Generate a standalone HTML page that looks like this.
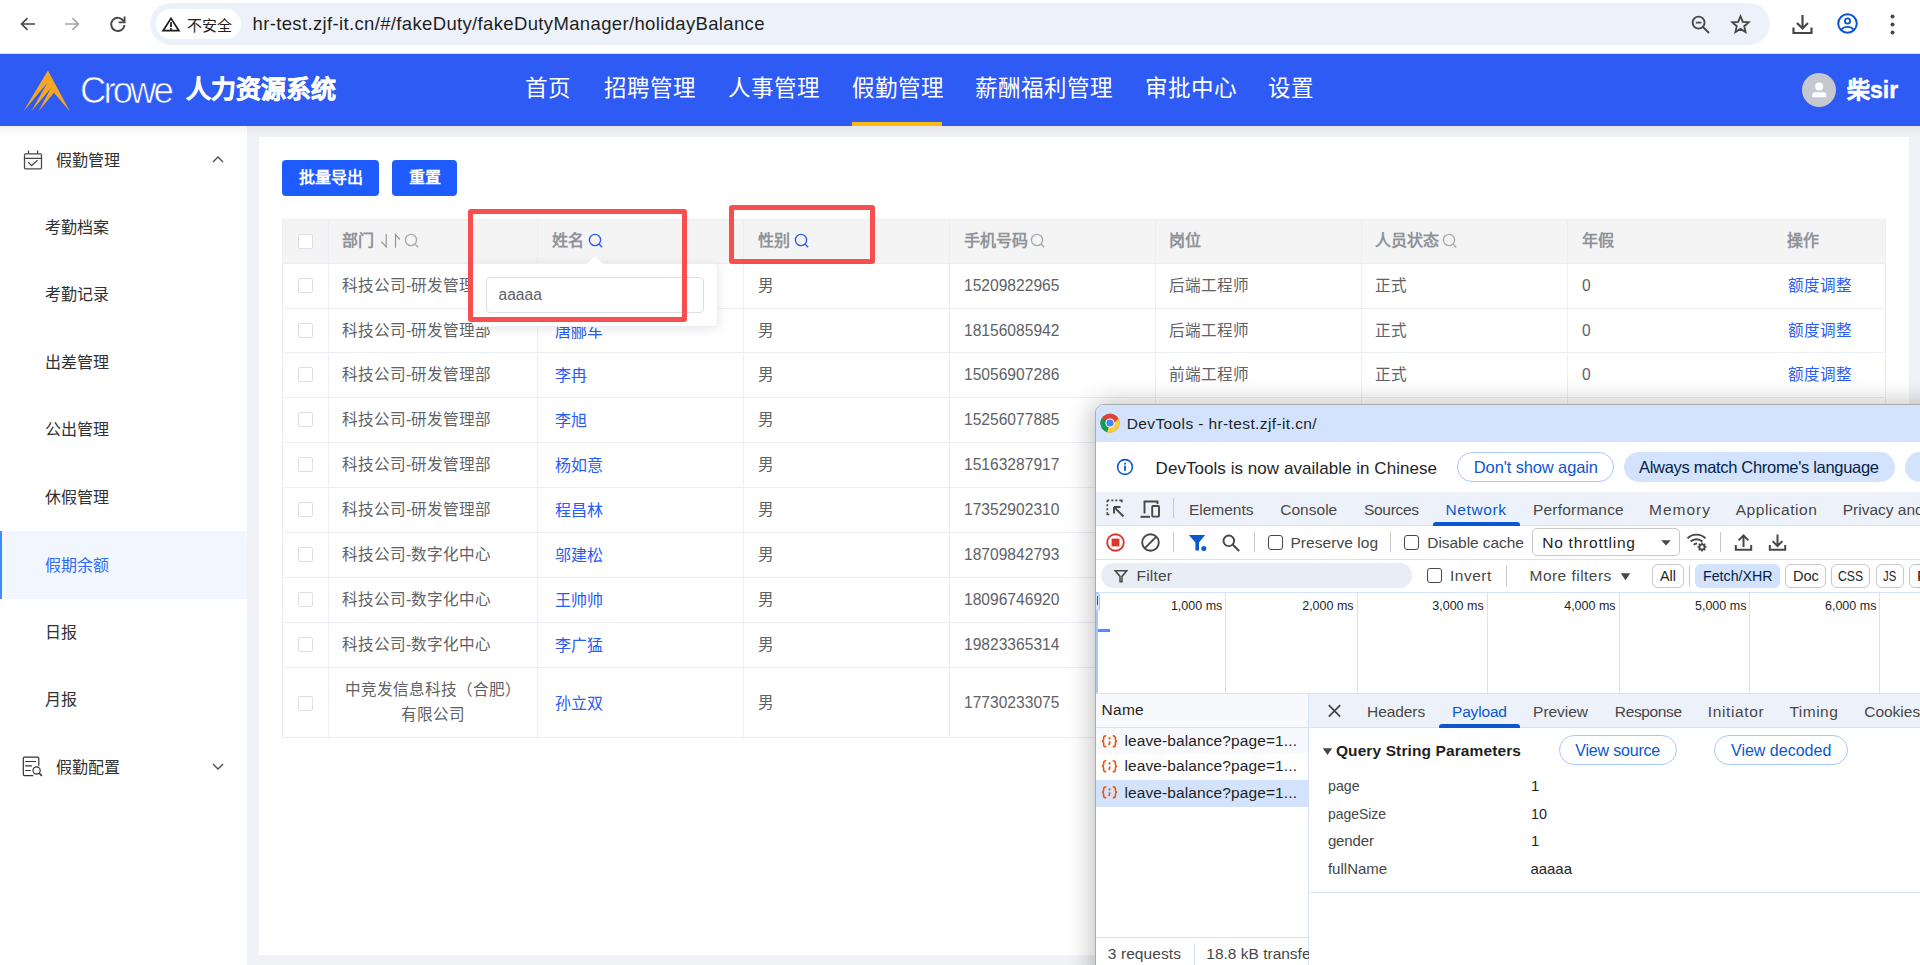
<!DOCTYPE html><html lang="zh-CN"><head><meta charset="utf-8"><style>
*{box-sizing:border-box;margin:0;padding:0}
html,body{width:1920px;height:965px;overflow:hidden}
body{position:relative;background:#f0f2f5;font-family:"Liberation Sans",sans-serif;color:#303133}
.a{position:absolute;white-space:nowrap}
#chrome{left:0;top:0;width:1920px;height:54px;background:#fff;border-bottom:1px solid #dadce0}
#omni{left:150px;top:3px;width:1620px;height:42px;border-radius:21px;background:#edf2fa}
#chip{left:156px;top:9px;width:85px;height:30px;border-radius:15px;background:#fff}
#chiptxt{left:186.5px;top:15.5px;font-size:15px;color:#1f1f1f;line-height:20px}
#url{left:252px;top:12px;font-size:19px;color:#1f1f1f;line-height:24px;letter-spacing:0.23px}
#hdr{left:0;top:54px;width:1920px;height:72px;background:#2f5bf5}
#crowe{left:80px;top:69px;font-size:36.5px;color:#fff;line-height:44px;letter-spacing:-2.9px;-webkit-text-stroke:0.7px #2f5bf5}
#sysname{left:186px;top:72px;font-size:25px;font-weight:bold;color:#fff;line-height:34px;-webkit-text-stroke:0.5px #fff}
.nav{top:72px;font-size:22.5px;color:#fff;line-height:34px}
#navline{left:852px;top:122px;width:90px;height:4px;background:#fdb913}
#avatar{left:1802px;top:73px;width:34px;height:34px;border-radius:50%;background:#c5c8cf;overflow:hidden}
#uname{left:1847px;top:73px;font-size:23px;font-weight:bold;color:#fff;line-height:34px;-webkit-text-stroke:0.4px #fff}
#side{left:0;top:126px;width:247px;height:839px;background:#fff}
#hshadow{left:0;top:126px;width:1920px;height:10px;background:linear-gradient(rgba(0,0,0,0.05),rgba(0,0,0,0))}
.si{left:45px;font-size:16px;color:#303133;line-height:22px}
#active{left:0;top:531px;width:247px;height:68px;background:#f2f7ff;border-left:2px solid #3d8bff}
#card{left:259px;top:137px;width:1650px;height:818px;background:#fff}
.btn{top:160px;height:36px;border-radius:4px;background:#1f5cff;color:#fff;font-size:16px;font-weight:bold;line-height:36px;text-align:center}
.hl{height:1px;background:#ebeef5}
.vl{width:1px;background:#ebeef5}
.th{font-size:16px;font-weight:bold;color:#909399;line-height:22px}
.td{font-size:15.6px;color:#606266;line-height:22px}
.lk{font-size:15.6px;color:#2a5cf6;line-height:22px}
.cb{width:15px;height:15px;border:1px solid #dcdfe6;border-radius:2px;background:#fff}
.red{border:5px solid #f74f4f;border-radius:3px}
/* devtools */
.dt{font-family:"Liberation Sans",sans-serif}
</style></head><body>
<div id="chrome" class="a"></div><div id="omni" class="a"></div><div id="chip" class="a"></div>
<svg class="a" style="left:18px;top:14px" width="20" height="20" viewBox="0 0 20 20"><path d="M17 10H4M9.5 4.2L3.6 10l5.9 5.8" fill="none" stroke="#474747" stroke-width="1.7"/></svg>
<svg class="a" style="left:62px;top:14px" width="20" height="20" viewBox="0 0 20 20"><path d="M3 10H16M10.5 4.2L16.4 10l-5.9 5.8" fill="none" stroke="#a8a8a8" stroke-width="1.7"/></svg>
<svg class="a" style="left:108px;top:14px" width="20" height="20" viewBox="0 0 20 20"><path d="M15.6 7.2A6.6 6.6 0 1 0 16.4 11" fill="none" stroke="#474747" stroke-width="1.9"/><path d="M16.6 2.4V8.4H10.6" fill="none" stroke="#474747" stroke-width="1.9"/></svg>
<svg class="a" style="left:161px;top:16px" width="20" height="17" viewBox="0 0 20 17"><path d="M10 2.4 L17.9 14.7 H2.1 Z" fill="none" stroke="#1f1f1f" stroke-width="1.7" stroke-linejoin="miter"/><rect x="9.1" y="6.2" width="1.8" height="4.8" fill="#1f1f1f"/><rect x="9.1" y="12" width="1.8" height="1.8" fill="#1f1f1f"/></svg>
<div id="chiptxt" class="a">不安全</div>
<div class="a" style="left:252.50px;top:14.84px;font-size:18.50px;line-height:18.50px;color:#1f1f1f;letter-spacing:0.353px;">hr-test.zjf-it.cn/#/fakeDuty/fakeDutyManager/holidayBalance</div>
<svg class="a" style="left:1690px;top:14px" width="22" height="22" viewBox="0 0 22 22"><circle cx="8.6" cy="8.6" r="6" fill="none" stroke="#474747" stroke-width="1.9"/><path d="M13 13L19 19M5.8 8.6H11.4" stroke="#474747" stroke-width="1.9" fill="none"/></svg>
<svg class="a" style="left:1730px;top:14px" width="21" height="20" viewBox="0 0 21 20"><path d="M10.5 2.2l2.3 5.6 6 .5-4.6 3.9 1.4 5.9-5.1-3.2-5.1 3.2 1.4-5.9-4.6-3.9 6-.5z" fill="none" stroke="#474747" stroke-width="1.8" stroke-linejoin="miter"/></svg>
<svg class="a" style="left:1791px;top:13px" width="23" height="23" viewBox="0 0 23 23"><path d="M11.5 2V15M6 10l5.5 5.5L17 10" fill="none" stroke="#474747" stroke-width="2.2"/><path d="M2.5 14.5V20H20.5V14.5" fill="none" stroke="#474747" stroke-width="2.2"/></svg>
<svg class="a" style="left:1836px;top:12px" width="23" height="23" viewBox="0 0 23 23"><circle cx="11.5" cy="11.5" r="9.3" fill="none" stroke="#0b57d0" stroke-width="2"/><circle cx="11.5" cy="9" r="2.6" fill="none" stroke="#0b57d0" stroke-width="1.8"/><path d="M5.2 17.6C7 15.6 9 14.9 11.5 14.9S16 15.6 17.8 17.6" fill="none" stroke="#0b57d0" stroke-width="1.8"/></svg>
<svg class="a" style="left:1888px;top:13px" width="9" height="23" viewBox="0 0 9 23"><circle cx="4.5" cy="3.5" r="2" fill="#474747"/><circle cx="4.5" cy="11.5" r="2" fill="#474747"/><circle cx="4.5" cy="19.5" r="2" fill="#474747"/></svg>
<div id="hdr" class="a"></div>
<svg class="a" style="left:20px;top:67px" width="54" height="48" viewBox="0 0 54 48"><path d="M27.9 3.5 L50 44.5 L33.9 25.8 L18.4 44.5 L30.8 21.2 L11.2 44.5 L27.2 16 L3.3 44.5 Z" fill="#f5a623"/></svg>
<div id="crowe" class="a">Crowe</div>
<div id="sysname" class="a">人力资源系统</div>
<div class="a nav" style="left:525px">首页</div>
<div class="a nav" style="left:604px">招聘管理</div>
<div class="a nav" style="left:728px">人事管理</div>
<div class="a nav" style="left:852px">假勤管理</div>
<div class="a nav" style="left:975px">薪酬福利管理</div>
<div class="a nav" style="left:1145px">审批中心</div>
<div class="a nav" style="left:1268px">设置</div>
<div id="navline" class="a"></div>
<div id="avatar" class="a"><svg width="34" height="34" viewBox="0 0 34 34"><circle cx="17.2" cy="13.6" r="4" fill="#fff"/><path d="M10.2 24.3V22C10.2 20.2 11.2 19.3 13 19.3H21.4C23.2 19.3 24.2 20.2 24.2 22V24.3Z" fill="#fff"/></svg></div>
<div id="uname" class="a">柴sir</div>
<div id="side" class="a"></div><div id="hshadow" class="a"></div><div id="active" class="a"></div>
<svg class="a" style="left:22px;top:149px" width="22" height="22" viewBox="0 0 22 22"><rect x="2.5" y="4.8" width="17" height="15" rx="1.2" fill="none" stroke="#4a4a4a" stroke-width="1.3"/><path d="M2.5 9.3H19.5M6.5 1.5V5M15.6 1.5V5" stroke="#4a4a4a" stroke-width="1.3" fill="none"/><path d="M6.3 13.3L9.6 16.6L15.6 11.3" stroke="#4a4a4a" stroke-width="1.3" fill="none"/></svg>
<svg class="a" style="left:211px;top:154px" width="14" height="10" viewBox="0 0 14 10"><path d="M2 8L7 3L12 8" fill="none" stroke="#4a4a4a" stroke-width="1.3"/></svg>
<div class="a si" style="left:56px;top:149.5px">假勤管理</div>
<div class="a si" style="top:217px">考勤档案</div>
<div class="a si" style="top:284px">考勤记录</div>
<div class="a si" style="top:352px">出差管理</div>
<div class="a si" style="top:419px">公出管理</div>
<div class="a si" style="top:487px">休假管理</div>
<div class="a si" style="top:622px">日报</div>
<div class="a si" style="top:689px">月报</div>
<div class="a si" style="top:554.5px;color:#2f6bff">假期余额</div>
<svg class="a" style="left:21px;top:756px" width="24" height="22" viewBox="0 0 24 22"><path d="M12.3 19.6H3.6Q2.3 19.6 2.3 18.3V2.5Q2.3 1.2 3.6 1.2H16.5Q17.8 1.2 17.8 2.5V9.8" fill="none" stroke="#333" stroke-width="1.2"/><path d="M4.2 5.5H15M4.2 9.8H10.9M4.2 14.5H9.6" stroke="#333" stroke-width="1.2"/><circle cx="15.6" cy="14.5" r="3.6" fill="none" stroke="#333" stroke-width="1.2"/><path d="M18.2 17.2L20.9 19.9" stroke="#333" stroke-width="1.6"/></svg>
<svg class="a" style="left:211px;top:761px" width="14" height="10" viewBox="0 0 14 10"><path d="M2 3L7 8L12 3" fill="none" stroke="#4a4a4a" stroke-width="1.3"/></svg>
<div class="a si" style="left:56px;top:757px">假勤配置</div>
<div id="card" class="a"></div>
<div class="a btn" style="left:282px;width:97px">批量导出</div>
<div class="a btn" style="left:392px;width:65px">重置</div>
<div class="a" style="left:282.0px;top:219px;width:1604.0px;height:44.0px;background:#f4f4f5"></div>
<div class="a hl" style="left:282.0px;top:219.0px;width:1604.0px"></div>
<div class="a hl" style="left:282.0px;top:263.0px;width:1604.0px"></div>
<div class="a hl" style="left:282.0px;top:308.0px;width:1604.0px"></div>
<div class="a hl" style="left:282.0px;top:352.0px;width:1604.0px"></div>
<div class="a hl" style="left:282.0px;top:397.0px;width:1604.0px"></div>
<div class="a hl" style="left:282.0px;top:442.0px;width:1604.0px"></div>
<div class="a hl" style="left:282.0px;top:487.0px;width:1604.0px"></div>
<div class="a hl" style="left:282.0px;top:532.0px;width:1604.0px"></div>
<div class="a hl" style="left:282.0px;top:577.0px;width:1604.0px"></div>
<div class="a hl" style="left:282.0px;top:622.0px;width:1604.0px"></div>
<div class="a hl" style="left:282.0px;top:667.0px;width:1604.0px"></div>
<div class="a hl" style="left:282.0px;top:737.0px;width:1604.0px"></div>
<div class="a vl" style="left:282.0px;top:219px;height:519.0px"></div>
<div class="a vl" style="left:328.0px;top:219px;height:519.0px"></div>
<div class="a vl" style="left:537.0px;top:219px;height:519.0px"></div>
<div class="a vl" style="left:743.0px;top:219px;height:519.0px"></div>
<div class="a vl" style="left:949.0px;top:219px;height:519.0px"></div>
<div class="a vl" style="left:1155.0px;top:219px;height:519.0px"></div>
<div class="a vl" style="left:1361.0px;top:219px;height:519.0px"></div>
<div class="a vl" style="left:1567.0px;top:219px;height:519.0px"></div>
<div class="a vl" style="left:1885.0px;top:219px;height:519.0px"></div>
<div class="a cb" style="left:298px;top:233.5px"></div>
<div class="a th" style="left:342.0px;top:230px">部门</div>
<div class="a th" style="left:552.0px;top:230px">姓名</div>
<div class="a th" style="left:758.0px;top:230px">性别</div>
<div class="a th" style="left:964.0px;top:230px">手机号码</div>
<div class="a th" style="left:1169.0px;top:230px">岗位</div>
<div class="a th" style="left:1375.0px;top:230px">人员状态</div>
<div class="a th" style="left:1581.5px;top:230px">年假</div>
<div class="a th" style="left:1787.0px;top:230px">操作</div>
<svg class="a" style="left:379px;top:233px" width="24" height="16" viewBox="0 0 24 16"><path d="M7.25 1V13.9L2.25 8.6M16.5 14.7V1.7L21 6.5" fill="none" stroke="#8d9098" stroke-width="1.1"/></svg>
<svg class="a" style="left:404.0px;top:233px" width="16" height="16" viewBox="0 0 16 16"><circle cx="7" cy="7" r="5.6" fill="none" stroke="#a8abb2" stroke-width="1.4"/><path d="M11 11L14.2 14.2" stroke="#a8abb2" stroke-width="1.4"/></svg>
<svg class="a" style="left:587.5px;top:233px" width="16" height="16" viewBox="0 0 16 16"><circle cx="7" cy="7" r="5.6" fill="none" stroke="#2a5cf6" stroke-width="1.4"/><path d="M11 11L14.2 14.2" stroke="#2a5cf6" stroke-width="1.4"/></svg>
<svg class="a" style="left:793.5px;top:233px" width="16" height="16" viewBox="0 0 16 16"><circle cx="7" cy="7" r="5.6" fill="none" stroke="#2a5cf6" stroke-width="1.4"/><path d="M11 11L14.2 14.2" stroke="#2a5cf6" stroke-width="1.4"/></svg>
<svg class="a" style="left:1030.0px;top:233px" width="16" height="16" viewBox="0 0 16 16"><circle cx="7" cy="7" r="5.6" fill="none" stroke="#a8abb2" stroke-width="1.4"/><path d="M11 11L14.2 14.2" stroke="#a8abb2" stroke-width="1.4"/></svg>
<svg class="a" style="left:1442.0px;top:233px" width="16" height="16" viewBox="0 0 16 16"><circle cx="7" cy="7" r="5.6" fill="none" stroke="#a8abb2" stroke-width="1.4"/><path d="M11 11L14.2 14.2" stroke="#a8abb2" stroke-width="1.4"/></svg>
<div class="a cb" style="left:298px;top:278.0px"></div>
<div class="a td" style="left:342px;top:274.5px">科技公司-研发管理部</div>
<div class="a td" style="left:758px;top:274.5px">男</div>
<div class="a td" style="left:964px;top:274.5px">15209822965</div>
<div class="a td" style="left:1169px;top:274.5px">后端工程师</div>
<div class="a td" style="left:1375px;top:274.5px">正式</div>
<div class="a td" style="left:1582px;top:274.5px">0</div>
<div class="a lk" style="left:1788px;top:274.5px">额度调整</div>
<div class="a cb" style="left:298px;top:323.0px"></div>
<div class="a td" style="left:342px;top:319.5px">科技公司-研发管理部</div>
<div class="a lk" style="left:555px;top:320.8px;font-size:16px">唐郦车</div>
<div class="a td" style="left:758px;top:319.5px">男</div>
<div class="a td" style="left:964px;top:319.5px">18156085942</div>
<div class="a td" style="left:1169px;top:319.5px">后端工程师</div>
<div class="a td" style="left:1375px;top:319.5px">正式</div>
<div class="a td" style="left:1582px;top:319.5px">0</div>
<div class="a lk" style="left:1788px;top:319.5px">额度调整</div>
<div class="a cb" style="left:298px;top:367.0px"></div>
<div class="a td" style="left:342px;top:363.5px">科技公司-研发管理部</div>
<div class="a lk" style="left:555px;top:364.8px;font-size:16px">李冉</div>
<div class="a td" style="left:758px;top:363.5px">男</div>
<div class="a td" style="left:964px;top:363.5px">15056907286</div>
<div class="a td" style="left:1169px;top:363.5px">前端工程师</div>
<div class="a td" style="left:1375px;top:363.5px">正式</div>
<div class="a td" style="left:1582px;top:363.5px">0</div>
<div class="a lk" style="left:1788px;top:363.5px">额度调整</div>
<div class="a cb" style="left:298px;top:412.0px"></div>
<div class="a td" style="left:342px;top:408.5px">科技公司-研发管理部</div>
<div class="a lk" style="left:555px;top:409.8px;font-size:16px">李旭</div>
<div class="a td" style="left:758px;top:408.5px">男</div>
<div class="a td" style="left:964px;top:408.5px">15256077885</div>
<div class="a cb" style="left:298px;top:457.0px"></div>
<div class="a td" style="left:342px;top:453.5px">科技公司-研发管理部</div>
<div class="a lk" style="left:555px;top:454.8px;font-size:16px">杨如意</div>
<div class="a td" style="left:758px;top:453.5px">男</div>
<div class="a td" style="left:964px;top:453.5px">15163287917</div>
<div class="a cb" style="left:298px;top:502.0px"></div>
<div class="a td" style="left:342px;top:498.5px">科技公司-研发管理部</div>
<div class="a lk" style="left:555px;top:499.8px;font-size:16px">程昌林</div>
<div class="a td" style="left:758px;top:498.5px">男</div>
<div class="a td" style="left:964px;top:498.5px">17352902310</div>
<div class="a cb" style="left:298px;top:547.0px"></div>
<div class="a td" style="left:342px;top:543.5px">科技公司-数字化中心</div>
<div class="a lk" style="left:555px;top:544.8px;font-size:16px">邬建松</div>
<div class="a td" style="left:758px;top:543.5px">男</div>
<div class="a td" style="left:964px;top:543.5px">18709842793</div>
<div class="a cb" style="left:298px;top:592.0px"></div>
<div class="a td" style="left:342px;top:588.5px">科技公司-数字化中心</div>
<div class="a lk" style="left:555px;top:589.8px;font-size:16px">王帅帅</div>
<div class="a td" style="left:758px;top:588.5px">男</div>
<div class="a td" style="left:964px;top:588.5px">18096746920</div>
<div class="a cb" style="left:298px;top:637.0px"></div>
<div class="a td" style="left:342px;top:633.5px">科技公司-数字化中心</div>
<div class="a lk" style="left:555px;top:634.8px;font-size:16px">李广猛</div>
<div class="a td" style="left:758px;top:633.5px">男</div>
<div class="a td" style="left:964px;top:633.5px">19823365314</div>
<div class="a cb" style="left:298px;top:695.5px"></div>
<div class="a td" style="left:328px;width:209.5px;top:677.0px;text-align:center;white-space:normal;line-height:25px;padding:0 16px">中竞发信息科技（合肥）有限公司</div>
<div class="a lk" style="left:555px;top:692.8px;font-size:16px">孙立双</div>
<div class="a td" style="left:758px;top:691.5px">男</div>
<div class="a td" style="left:964px;top:691.5px">17730233075</div>
<div class="a" style="left:472px;top:263px;width:246px;height:64px;background:#fff;border-radius:4px;border:1px solid #ebeef5;box-shadow:0 2px 12px rgba(0,0,0,0.1)"></div>
<svg class="a" style="left:584px;top:252px" width="22" height="12" viewBox="0 0 22 12"><path d="M3 12L11 4L19 12Z" fill="#fff"/></svg>
<div class="a" style="left:486px;top:277px;width:218px;height:35.5px;border:1px solid #dcdfe6;border-radius:4px;background:#fff"></div>
<div class="a td" style="left:498.5px;top:284px">aaaaa</div>
<div class="a red" style="left:467.5px;top:209px;width:219px;height:113px"></div>
<div class="a red" style="left:729px;top:205px;width:146px;height:58.5px"></div>
<div class="a" style="left:1095px;top:404px;width:900px;height:600px;border-radius:9px;background:#fff;box-shadow:-2px 0 26px rgba(0,0,0,0.28);border:1px solid #ababab;overflow:hidden">
</div>
<div class="a" style="left:1096px;top:405px;width:830px;height:37px;background:#d3e3fd;border-top-left-radius:8px"></div>
<svg class="a" style="left:1100px;top:413px" width="20" height="20" viewBox="0 0 20 20">
<circle cx="10" cy="10" r="9.6" fill="#db4437"/>
<path d="M10 10 L1.7 5.2 A9.6 9.6 0 0 0 7.2 19.2 Z" fill="#0f9d58"/>
<path d="M10 10 L7.2 19.2 A9.6 9.6 0 0 0 19.6 10 L18.3 5.2 Z" fill="#ffcd40"/>
<path d="M10 5.4 H18.3 L14 10 Z" fill="#db4437"/>
<circle cx="10" cy="10" r="4.6" fill="#fff"/><circle cx="10" cy="10" r="3.6" fill="#4285f4"/></svg>
<div class="a" style="left:1126.70px;top:416.08px;font-size:15.50px;line-height:15.50px;color:#1f1f1f;letter-spacing:0.386px;">DevTools - hr-test.zjf-it.cn/</div>
<svg class="a" style="left:1116px;top:458px" width="18" height="18" viewBox="0 0 18 18"><circle cx="9" cy="9" r="7.4" fill="none" stroke="#0b57d0" stroke-width="1.6"/><rect x="8.1" y="7.6" width="1.8" height="5.2" fill="#0b57d0"/><rect x="8.1" y="4.8" width="1.8" height="1.8" fill="#0b57d0"/></svg>
<div class="a" style="left:1155.60px;top:459.81px;font-size:17.00px;line-height:17.00px;color:#1f1f1f;letter-spacing:0.050px;">DevTools is now available in Chinese</div>
<div class="a" style="left:1457px;top:452px;width:157px;height:30px;border:1px solid #a8c7fa;border-radius:15px"></div>
<div class="a" style="left:1473.80px;top:458.53px;font-size:16.50px;line-height:16.50px;color:#0b57d0;letter-spacing:-0.124px;">Don't show again</div>
<div class="a" style="left:1624px;top:452px;width:271px;height:30px;background:#d3e3fd;border-radius:15px"></div>
<div class="a" style="left:1639.00px;top:458.53px;font-size:16.50px;line-height:16.50px;color:#041e49;letter-spacing:-0.308px;">Always match Chrome's language</div>
<div class="a" style="left:1905px;top:452px;width:60px;height:30px;background:#d3e3fd;border-radius:15px"></div>
<div class="a" style="left:1096px;top:492px;width:830px;height:34px;background:#edf2fa;border-bottom:1px solid #d3e3fd"></div>
<svg class="a" style="left:1105px;top:498px" width="22" height="21" viewBox="0 0 22 21"><path d="M2.3 2.3h2M6.3 2.3h2M10.3 2.3h2M14.3 2.3h2.5v2M2.3 2.3v2M2.3 6.3v2M2.3 10.3v2M2.3 14.3v2.2h2" fill="none" stroke="#474747" stroke-width="1.7"/><path d="M9 9L18.5 18.5M9 9V15.5M9 9H15.5" fill="none" stroke="#474747" stroke-width="1.9"/></svg>
<svg class="a" style="left:1139px;top:498px" width="23" height="21" viewBox="0 0 23 21"><path d="M5.5 15.5V3.5H18.5V6" fill="none" stroke="#474747" stroke-width="1.9"/><path d="M1.5 18.8H11" stroke="#474747" stroke-width="2"/><rect x="13.2" y="8" width="6.8" height="10.6" rx="0.8" fill="none" stroke="#474747" stroke-width="1.9"/></svg>
<div class="a" style="left:1173px;top:498px;width:1px;height:20px;background:#c7c7c7"></div>
<div class="a" style="left:1189.00px;top:502.08px;font-size:15.50px;line-height:15.50px;color:#474747;letter-spacing:-0.028px;">Elements</div>
<div class="a" style="left:1280.25px;top:502.08px;font-size:15.50px;line-height:15.50px;color:#474747;letter-spacing:0.019px;">Console</div>
<div class="a" style="left:1364.00px;top:502.08px;font-size:15.50px;line-height:15.50px;color:#474747;letter-spacing:-0.308px;">Sources</div>
<div class="a" style="left:1445.50px;top:502.08px;font-size:15.50px;line-height:15.50px;color:#0b57d0;letter-spacing:0.603px;">Network</div>
<div class="a" style="left:1533.00px;top:502.08px;font-size:15.50px;line-height:15.50px;color:#474747;letter-spacing:0.201px;">Performance</div>
<div class="a" style="left:1649.00px;top:502.08px;font-size:15.50px;line-height:15.50px;color:#474747;letter-spacing:1.001px;">Memory</div>
<div class="a" style="left:1735.75px;top:502.08px;font-size:15.50px;line-height:15.50px;color:#474747;letter-spacing:0.517px;">Application</div>
<div class="a" style="left:1842.75px;top:502.08px;font-size:15.50px;line-height:15.50px;color:#474747;letter-spacing:0.000px;">Privacy and security</div>
<div class="a" style="left:1432.5px;top:522px;width:87.5px;height:4px;background:#0b57d0;border-radius:3px 3px 0 0"></div>
<div class="a" style="left:1096px;top:559px;width:830px;height:1px;background:#d3e3fd"></div>
<svg class="a" style="left:1105px;top:532px" width="21" height="21" viewBox="0 0 21 21"><circle cx="10.5" cy="10.5" r="8.3" fill="none" stroke="#dc362e" stroke-width="1.9"/><rect x="6.6" y="6.6" width="7.8" height="7.8" fill="#dc362e"/></svg>
<svg class="a" style="left:1140px;top:532px" width="21" height="21" viewBox="0 0 21 21"><circle cx="10.5" cy="10.5" r="8.3" fill="none" stroke="#474747" stroke-width="1.9"/><path d="M4.6 16.4L16.4 4.6" stroke="#474747" stroke-width="1.9"/></svg>
<div class="a" style="left:1173px;top:532px;width:1px;height:20px;background:#c7c7c7"></div>
<svg class="a" style="left:1188px;top:534px" width="20" height="18" viewBox="0 0 20 18"><path d="M0.8 1H17.2L11 8.6V16.4H7.4V8.6Z" fill="#0b57d0"/><circle cx="15.8" cy="14.4" r="2.5" fill="#0b57d0"/></svg>
<svg class="a" style="left:1222px;top:534px" width="19" height="18" viewBox="0 0 19 18"><circle cx="6.8" cy="6.8" r="5.3" fill="none" stroke="#474747" stroke-width="1.9"/><path d="M10.6 10.6L17.2 17" stroke="#474747" stroke-width="2.1"/></svg>
<div class="a" style="left:1254px;top:532px;width:1px;height:20px;background:#c7c7c7"></div>
<div class="a" style="left:1268px;top:535px;width:15px;height:15px;border:1.6px solid #474747;border-radius:3px"></div>
<div class="a" style="left:1290.40px;top:534.68px;font-size:15.50px;line-height:15.50px;color:#474747;letter-spacing:0.061px;">Preserve log</div>
<div class="a" style="left:1390px;top:532px;width:1px;height:20px;background:#c7c7c7"></div>
<div class="a" style="left:1404px;top:535px;width:15px;height:15px;border:1.6px solid #474747;border-radius:3px"></div>
<div class="a" style="left:1427.30px;top:534.68px;font-size:15.50px;line-height:15.50px;color:#474747;letter-spacing:-0.057px;">Disable cache</div>
<div class="a" style="left:1531.5px;top:527.7px;width:148px;height:28.5px;border:1px solid #c7c7c7;border-radius:5px"></div>
<div class="a" style="left:1542.20px;top:534.68px;font-size:15.50px;line-height:15.50px;color:#1f1f1f;letter-spacing:0.768px;">No throttling</div>
<svg class="a" style="left:1660px;top:539px" width="12" height="8" viewBox="0 0 12 8"><path d="M1.2 1.2H10.8L6 6.4Z" fill="#474747"/></svg>
<svg class="a" style="left:1686px;top:532px" width="23" height="20" viewBox="0 0 23 20"><path d="M1.5 6.2A13 13 0 0 1 19.5 6.2M4.6 9.5A8.8 8.8 0 0 1 16.4 9.5M7.7 12.8A4.5 4.5 0 0 1 11 11.5" fill="none" stroke="#474747" stroke-width="1.9"/><circle cx="16" cy="15" r="2.6" fill="none" stroke="#474747" stroke-width="1.9"/><path d="M16 10.5V12M16 18V19.5M11.5 15H13M19 15H20.5M12.8 11.8L13.9 12.9M18.1 17.1L19.2 18.2M12.8 18.2L13.9 17.1M18.1 12.9L19.2 11.8" stroke="#474747" stroke-width="1.6"/></svg>
<div class="a" style="left:1720px;top:532px;width:1px;height:20px;background:#c7c7c7"></div>
<svg class="a" style="left:1734px;top:533px" width="19" height="19" viewBox="0 0 19 19"><path d="M9.5 14V2.5M4.6 7.4L9.5 2.5L14.4 7.4M1.8 12V16.8H17.2V12" fill="none" stroke="#474747" stroke-width="2"/></svg>
<svg class="a" style="left:1768px;top:533px" width="19" height="19" viewBox="0 0 19 19"><path d="M9.5 1.5V13M4.6 8.1L9.5 13L14.4 8.1M1.8 12V16.8H17.2V12" fill="none" stroke="#474747" stroke-width="2"/></svg>
<div class="a" style="left:1096px;top:592px;width:830px;height:1px;background:#d3e3fd"></div>
<div class="a" style="left:1101px;top:563.4px;width:311px;height:24.4px;border-radius:12.2px;background:#e9eef6"></div>
<svg class="a" style="left:1114px;top:569px" width="14" height="14" viewBox="0 0 14 14"><path d="M1.2 1.8H12.8L8 7.4V12.8H6V7.4Z" fill="none" stroke="#474747" stroke-width="1.5"/></svg>
<div class="a" style="left:1136.60px;top:568.38px;font-size:15.50px;line-height:15.50px;color:#474747;letter-spacing:0.170px;">Filter</div>
<div class="a" style="left:1427px;top:568px;width:15px;height:15px;border:1.6px solid #474747;border-radius:3px"></div>
<div class="a" style="left:1450.00px;top:568.38px;font-size:15.50px;line-height:15.50px;color:#474747;letter-spacing:0.510px;">Invert</div>
<div class="a" style="left:1506px;top:565.5px;width:1px;height:20px;background:#c7c7c7"></div>
<div class="a" style="left:1529.50px;top:568.38px;font-size:15.50px;line-height:15.50px;color:#474747;letter-spacing:0.468px;">More filters</div>
<svg class="a" style="left:1620px;top:572px" width="11" height="9" viewBox="0 0 11 9"><path d="M0.8 1.2H10.2L5.5 8.3Z" fill="#474747"/></svg>
<div class="a" style="left:1652px;top:564.3px;width:31.6px;height:23.5px;border:1px solid #c7c7c7;border-radius:6px"></div>
<div class="a" style="left:1659.50px;top:568.38px;font-size:15.50px;line-height:15.50px;color:#1f1f1f;letter-spacing:0.000px;transform:scaleX(0.9279);transform-origin:0 0;">All</div>
<div class="a" style="left:1689px;top:565.5px;width:1px;height:20px;background:#c7c7c7"></div>
<div class="a" style="left:1694.7px;top:564.3px;width:85px;height:23.5px;background:#d3e3fd;border-radius:6px"></div>
<div class="a" style="left:1702.80px;top:568.38px;font-size:15.50px;line-height:15.50px;color:#041e49;letter-spacing:0.000px;transform:scaleX(0.9183);transform-origin:0 0;">Fetch/XHR</div>
<div class="a" style="left:1785.2px;top:564.3px;width:40.6px;height:23.5px;border:1px solid #c7c7c7;border-radius:6px"></div>
<div class="a" style="left:1792.70px;top:568.38px;font-size:15.50px;line-height:15.50px;color:#1f1f1f;letter-spacing:0.000px;transform:scaleX(0.9364);transform-origin:0 0;">Doc</div>
<div class="a" style="left:1830.7px;top:564.3px;width:39.8px;height:23.5px;border:1px solid #c7c7c7;border-radius:6px"></div>
<div class="a" style="left:1838.20px;top:568.38px;font-size:15.50px;line-height:15.50px;color:#1f1f1f;letter-spacing:0.000px;transform:scaleX(0.7849);transform-origin:0 0;">CSS</div>
<div class="a" style="left:1875.9px;top:564.3px;width:27.9px;height:23.5px;border:1px solid #c7c7c7;border-radius:6px"></div>
<div class="a" style="left:1883.00px;top:568.38px;font-size:15.50px;line-height:15.50px;color:#1f1f1f;letter-spacing:0.000px;transform:scaleX(0.7294);transform-origin:0 0;">JS</div>
<div class="a" style="left:1909.0px;top:564.3px;width:51.0px;height:23.5px;border:1px solid #c7c7c7;border-radius:6px"></div>
<div class="a" style="left:1917.00px;top:568.38px;font-size:15.50px;line-height:15.50px;color:#1f1f1f;letter-spacing:0.000px;">Font</div>
<div class="a" style="left:1225.3px;top:592px;width:1px;height:101px;background:#d3e3fd"></div>
<div class="a" style="left:1170.89px;top:599.72px;font-size:12.50px;line-height:12.50px;color:#1f1f1f;letter-spacing:0.000px;">1,000 ms</div>
<div class="a" style="left:1356.6px;top:592px;width:1px;height:101px;background:#d3e3fd"></div>
<div class="a" style="left:1302.19px;top:599.72px;font-size:12.50px;line-height:12.50px;color:#1f1f1f;letter-spacing:0.000px;">2,000 ms</div>
<div class="a" style="left:1486.7px;top:592px;width:1px;height:101px;background:#d3e3fd"></div>
<div class="a" style="left:1432.29px;top:599.72px;font-size:12.50px;line-height:12.50px;color:#1f1f1f;letter-spacing:0.000px;">3,000 ms</div>
<div class="a" style="left:1618.6px;top:592px;width:1px;height:101px;background:#d3e3fd"></div>
<div class="a" style="left:1564.19px;top:599.72px;font-size:12.50px;line-height:12.50px;color:#1f1f1f;letter-spacing:0.000px;">4,000 ms</div>
<div class="a" style="left:1749.4px;top:592px;width:1px;height:101px;background:#d3e3fd"></div>
<div class="a" style="left:1694.99px;top:599.72px;font-size:12.50px;line-height:12.50px;color:#1f1f1f;letter-spacing:0.000px;">5,000 ms</div>
<div class="a" style="left:1879.4px;top:592px;width:1px;height:101px;background:#d3e3fd"></div>
<div class="a" style="left:1824.99px;top:599.72px;font-size:12.50px;line-height:12.50px;color:#1f1f1f;letter-spacing:0.000px;">6,000 ms</div>
<div class="a" style="left:1096px;top:592px;width:1.5px;height:101px;background:#a8c7fa"></div>
<div class="a" style="left:1096px;top:593px;width:4px;height:18px;background:#d3e3fd;border:1px solid #a8c7fa;border-left:none;border-radius:0 3px 3px 0"></div>
<div class="a" style="left:1096.5px;top:596px;width:1px;height:9px;background:#0b57d0"></div>
<div class="a" style="left:1098px;top:628.5px;width:11.5px;height:3px;background:#4d8ef7"></div>
<div class="a" style="left:1096px;top:693px;width:830px;height:1px;background:#d3e3fd"></div>
<div class="a" style="left:1096px;top:694px;width:212px;height:33px;background:#f8f9fd"></div>
<div class="a" style="left:1101.50px;top:702.08px;font-size:15.50px;line-height:15.50px;color:#1f1f1f;letter-spacing:0.285px;">Name</div>
<div class="a" style="left:1096px;top:727px;width:830px;height:1px;background:#d3e3fd"></div>
<div class="a" style="left:1096px;top:728px;width:212px;height:26px;background:#f8f9fd"></div>
<div class="a" style="left:1096px;top:780.2px;width:212px;height:26.7px;background:#d3e3fd"></div>
<svg class="a" style="left:1101px;top:734.5px" width="18" height="13" viewBox="0 0 18 13"><path d="M5.3 0.8C3.6 0.8 2.6 1.4 2.6 3.2V4.6C2.6 5.6 2 6.2 0.9 6.2 2 6.2 2.6 6.8 2.6 7.8V9.4C2.6 11.2 3.6 11.8 5.3 11.8M11.7 0.8C13.4 0.8 14.4 1.4 14.4 3.2V4.6C14.4 5.6 15 6.2 16.1 6.2 15 6.2 14.4 6.8 14.4 7.8V9.4C14.4 11.2 13.4 11.8 11.7 11.8" fill="none" stroke="#e8590c" stroke-width="1.6"/><circle cx="8.5" cy="3.4" r="1.15" fill="#e8590c"/><path d="M8.8 6.3L8.1 10.2" stroke="#e8590c" stroke-width="1.7" fill="none"/></svg>
<div class="a" style="left:1124.40px;top:732.88px;font-size:15.50px;line-height:15.50px;color:#1f1f1f;letter-spacing:0.108px;">leave-balance?page=1...</div>
<svg class="a" style="left:1101px;top:760.1px" width="18" height="13" viewBox="0 0 18 13"><path d="M5.3 0.8C3.6 0.8 2.6 1.4 2.6 3.2V4.6C2.6 5.6 2 6.2 0.9 6.2 2 6.2 2.6 6.8 2.6 7.8V9.4C2.6 11.2 3.6 11.8 5.3 11.8M11.7 0.8C13.4 0.8 14.4 1.4 14.4 3.2V4.6C14.4 5.6 15 6.2 16.1 6.2 15 6.2 14.4 6.8 14.4 7.8V9.4C14.4 11.2 13.4 11.8 11.7 11.8" fill="none" stroke="#e8590c" stroke-width="1.6"/><circle cx="8.5" cy="3.4" r="1.15" fill="#e8590c"/><path d="M8.8 6.3L8.1 10.2" stroke="#e8590c" stroke-width="1.7" fill="none"/></svg>
<div class="a" style="left:1124.40px;top:758.48px;font-size:15.50px;line-height:15.50px;color:#1f1f1f;letter-spacing:0.108px;">leave-balance?page=1...</div>
<svg class="a" style="left:1101px;top:786.4px" width="18" height="13" viewBox="0 0 18 13"><path d="M5.3 0.8C3.6 0.8 2.6 1.4 2.6 3.2V4.6C2.6 5.6 2 6.2 0.9 6.2 2 6.2 2.6 6.8 2.6 7.8V9.4C2.6 11.2 3.6 11.8 5.3 11.8M11.7 0.8C13.4 0.8 14.4 1.4 14.4 3.2V4.6C14.4 5.6 15 6.2 16.1 6.2 15 6.2 14.4 6.8 14.4 7.8V9.4C14.4 11.2 13.4 11.8 11.7 11.8" fill="none" stroke="#e8590c" stroke-width="1.6"/><circle cx="8.5" cy="3.4" r="1.15" fill="#e8590c"/><path d="M8.8 6.3L8.1 10.2" stroke="#e8590c" stroke-width="1.7" fill="none"/></svg>
<div class="a" style="left:1124.40px;top:784.78px;font-size:15.50px;line-height:15.50px;color:#1f1f1f;letter-spacing:0.108px;">leave-balance?page=1...</div>
<div class="a" style="left:1308px;top:693px;width:1px;height:300px;background:#d3e3fd"></div>
<div class="a" style="left:1096px;top:937px;width:212px;height:1px;background:#d3e3fd"></div>
<div class="a" style="left:1107.80px;top:945.58px;font-size:15.50px;line-height:15.50px;color:#474747;letter-spacing:0.091px;">3 requests</div>
<div class="a" style="left:1193.5px;top:943px;width:1px;height:22px;background:#d3e3fd"></div>
<div class="a" style="left:1196px;top:938px;width:112.5px;height:27px;overflow:hidden"><div class="a" style="left:10.30px;top:7.58px;font-size:15.50px;line-height:15.50px;color:#474747;letter-spacing:0.000px;">18.8 kB transferred</div></div>
<div class="a" style="left:1309px;top:694px;width:620px;height:33px;background:#edf2fa"></div>
<svg class="a" style="left:1327px;top:704px" width="15" height="14" viewBox="0 0 15 14"><path d="M1.8 1.2L13.2 12.6M13.2 1.2L1.8 12.6" stroke="#474747" stroke-width="1.8"/></svg>
<div class="a" style="left:1367.00px;top:703.68px;font-size:15.50px;line-height:15.50px;color:#474747;letter-spacing:-0.065px;">Headers</div>
<div class="a" style="left:1452.00px;top:703.68px;font-size:15.50px;line-height:15.50px;color:#0b57d0;letter-spacing:-0.172px;">Payload</div>
<div class="a" style="left:1533.10px;top:703.68px;font-size:15.50px;line-height:15.50px;color:#474747;letter-spacing:-0.047px;">Preview</div>
<div class="a" style="left:1614.80px;top:703.68px;font-size:15.50px;line-height:15.50px;color:#474747;letter-spacing:-0.356px;">Response</div>
<div class="a" style="left:1707.80px;top:703.68px;font-size:15.50px;line-height:15.50px;color:#474747;letter-spacing:0.620px;">Initiator</div>
<div class="a" style="left:1789.40px;top:703.68px;font-size:15.50px;line-height:15.50px;color:#474747;letter-spacing:0.496px;">Timing</div>
<div class="a" style="left:1864.20px;top:703.68px;font-size:15.50px;line-height:15.50px;color:#474747;letter-spacing:0.000px;">Cookies</div>
<div class="a" style="left:1439px;top:723.5px;width:81px;height:4px;background:#0b57d0;border-radius:3px 3px 0 0"></div>
<svg class="a" style="left:1322px;top:747px" width="11" height="9" viewBox="0 0 11 9"><path d="M0.8 1.2H10.2L5.5 8Z" fill="#474747"/></svg>
<div class="a" style="left:1335.90px;top:742.58px;font-size:15.50px;line-height:15.50px;color:#1f1f1f;letter-spacing:0.112px;font-weight:bold;">Query String Parameters</div>
<div class="a" style="left:1559.2px;top:735.1px;width:117.4px;height:29.5px;border:1px solid #a8c7fa;border-radius:15px"></div>
<div class="a" style="left:1575.20px;top:742.76px;font-size:16.00px;line-height:16.00px;color:#0b57d0;letter-spacing:-0.178px;">View source</div>
<div class="a" style="left:1714.2px;top:735.1px;width:133.5px;height:29.5px;border:1px solid #a8c7fa;border-radius:15px"></div>
<div class="a" style="left:1731.00px;top:742.76px;font-size:16.00px;line-height:16.00px;color:#0b57d0;letter-spacing:0.005px;">View decoded</div>
<div class="a" style="left:1327.90px;top:777.70px;font-size:15.00px;line-height:15.00px;color:#474747;letter-spacing:0.000px;transform:scaleX(0.9468);transform-origin:0 0;">page</div>
<div class="a" style="left:1531.00px;top:777.70px;font-size:15.00px;line-height:15.00px;color:#1f1f1f;letter-spacing:0.000px;">1</div>
<div class="a" style="left:1327.90px;top:806.00px;font-size:15.00px;line-height:15.00px;color:#474747;letter-spacing:0.000px;transform:scaleX(0.9273);transform-origin:0 0;">pageSize</div>
<div class="a" style="left:1531.00px;top:806.00px;font-size:15.00px;line-height:15.00px;color:#1f1f1f;letter-spacing:0.000px;transform:scaleX(0.9588);transform-origin:0 0;">10</div>
<div class="a" style="left:1327.90px;top:832.80px;font-size:15.00px;line-height:15.00px;color:#474747;letter-spacing:-0.145px;">gender</div>
<div class="a" style="left:1531.00px;top:832.80px;font-size:15.00px;line-height:15.00px;color:#1f1f1f;letter-spacing:0.000px;">1</div>
<div class="a" style="left:1327.90px;top:860.50px;font-size:15.00px;line-height:15.00px;color:#474747;letter-spacing:0.018px;">fullName</div>
<div class="a" style="left:1530.50px;top:860.50px;font-size:15.00px;line-height:15.00px;color:#1f1f1f;letter-spacing:-0.059px;">aaaaa</div>
<div class="a" style="left:1309.5px;top:892px;width:620px;height:1px;background:#d3e3fd"></div>
</body></html>
